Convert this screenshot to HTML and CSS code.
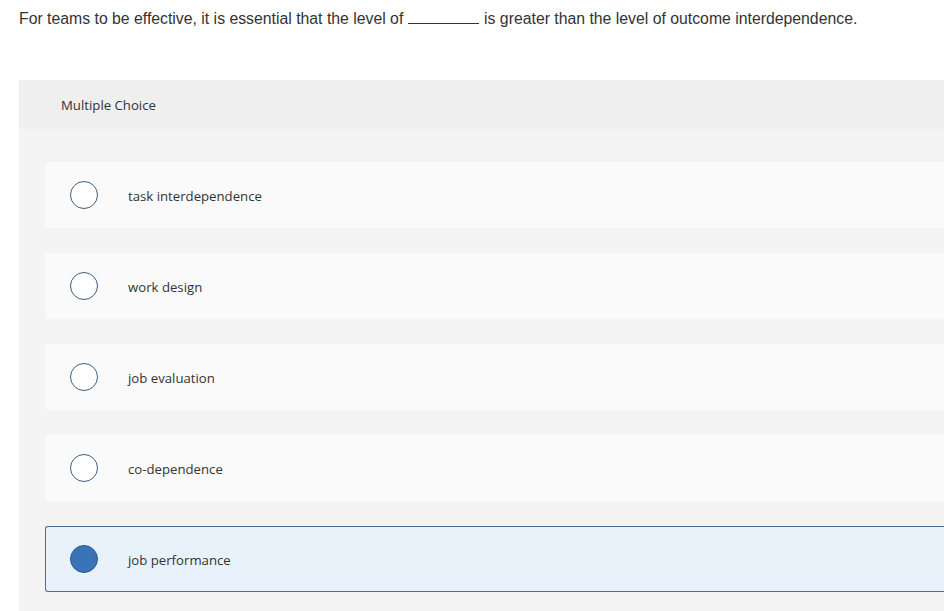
FILE: index.html
```html
<!DOCTYPE html>
<html>
<head>
<meta charset="utf-8">
<link rel="stylesheet" href="styles.css">
</head>
<body>
<div class="question">For teams to be effective, it is essential that the level of <span class="blank"></span> is greater than the level of outcome interdependence.</div>
<div class="panel">
  <div class="panel-head">Multiple Choice</div>
  <div class="choices">
    <div class="choice"><span class="radio"></span><span class="label">task interdependence</span></div>
    <div class="choice"><span class="radio"></span><span class="label">work design</span></div>
    <div class="choice"><span class="radio"></span><span class="label">job evaluation</span></div>
    <div class="choice"><span class="radio"></span><span class="label">co-dependence</span></div>
    <div class="choice selected"><span class="radio"></span><span class="label">job performance</span></div>
  </div>
</div>
</body>
</html>
```
FILE: styles.css
```css
html, body {
  margin: 0;
  padding: 0;
  background: #ffffff;
}
body {
  font-family: "Open Sans", "Liberation Sans", sans-serif;
  color: #333333;
  height: 611px;
  overflow: hidden;
}
.question {
  padding: 9px 0 0 19px;
  font-family: "Liberation Sans", Arial, sans-serif;
  font-size: 15.8px;
  line-height: 20px;
  color: #333333;
}
.blank {
  display: inline-block;
  width: 71px;
  border-bottom: 1px solid #333333;
  vertical-align: baseline;
  margin: 0 1px 0 0;
}
.panel {
  margin: 51px 0 0 19px;
  background: #f4f4f4;
  padding-bottom: 40px;
}
.panel-head {
  height: 49px;
  background: #efefef;
  display: flex;
  align-items: center;
  padding-left: 42px;
  font-size: 13.2px;
  color: #333333;
}
.choices {
  padding: 33px 0 0 26px;
  display: flex;
  flex-direction: column;
  gap: 25px;
}
.choice {
  height: 66px;
  box-sizing: border-box;
  background: #fafafa;
  border-radius: 3px 0 0 3px;
  display: flex;
  align-items: center;
  padding-left: 25px;
  border: 1px solid transparent;
  border-right: 0;
}
.radio {
  width: 28px;
  height: 28px;
  box-sizing: border-box;
  border-radius: 50%;
  border: 1.5px solid #3d5f7f;
  background: #ffffff;
  flex: none;
  margin-left: -1px;
}
.label {
  margin-left: 30px;
  padding-top: 2px;
  font-size: 13.2px;
  color: #333333;
}
.choice.selected {
  background: #e9f2fb;
  border-color: #4f6f8e;
}
.choice.selected .radio {
  background: #3a74b8;
  border-color: #2f5b88;
}
```
